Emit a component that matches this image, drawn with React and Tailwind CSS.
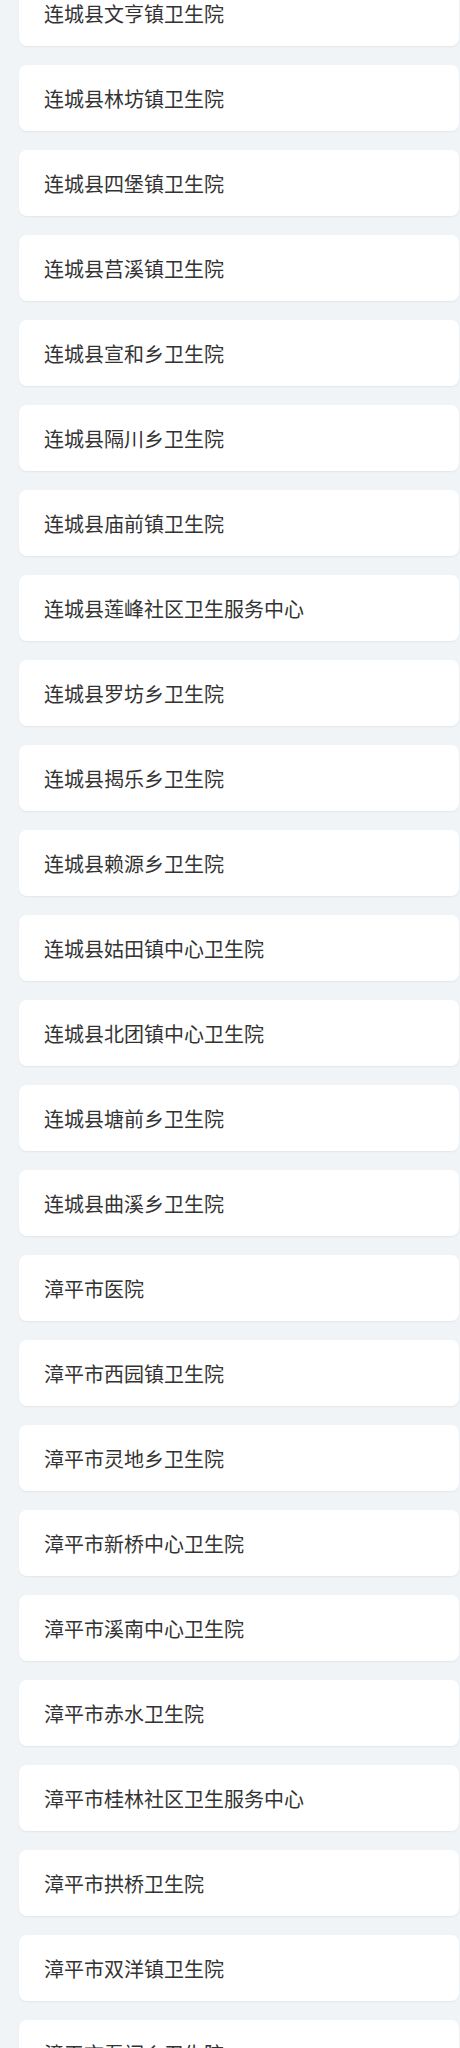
const hospitals = [
  '连城县文亨镇卫生院',
  '连城县林坊镇卫生院',
  '连城县四堡镇卫生院',
  '连城县莒溪镇卫生院',
  '连城县宣和乡卫生院',
  '连城县隔川乡卫生院',
  '连城县庙前镇卫生院',
  '连城县莲峰社区卫生服务中心',
  '连城县罗坊乡卫生院',
  '连城县揭乐乡卫生院',
  '连城县赖源乡卫生院',
  '连城县姑田镇中心卫生院',
  '连城县北团镇中心卫生院',
  '连城县塘前乡卫生院',
  '连城县曲溪乡卫生院',
  '漳平市医院',
  '漳平市西园镇卫生院',
  '漳平市灵地乡卫生院',
  '漳平市新桥中心卫生院',
  '漳平市溪南中心卫生院',
  '漳平市赤水卫生院',
  '漳平市桂林社区卫生服务中心',
  '漳平市拱桥卫生院',
  '漳平市双洋镇卫生院',
  '漳平市吾祠乡卫生院',
];

export default function App() {
  return (
    <div
      className="w-[460px] h-[2048px] overflow-hidden bg-[#f0f4f7]"
      style={{ fontFamily: '"Noto Sans CJK SC", "Noto Sans", sans-serif' }}
    >
      <div className="-mt-[20px] flex flex-col gap-[19px] pl-[19px] pr-[1px]">
        {hospitals.map((name) => (
          <div
            key={name}
            className="h-[66px] flex items-center pl-[25px] pt-[1px] bg-white rounded-[8px] shadow-[0_1px_2px_rgba(0,0,0,0.06)]"
          >
            <span className="text-[20px] leading-none text-[#333333]">{name}</span>
          </div>
        ))}
      </div>
    </div>
  );
}
